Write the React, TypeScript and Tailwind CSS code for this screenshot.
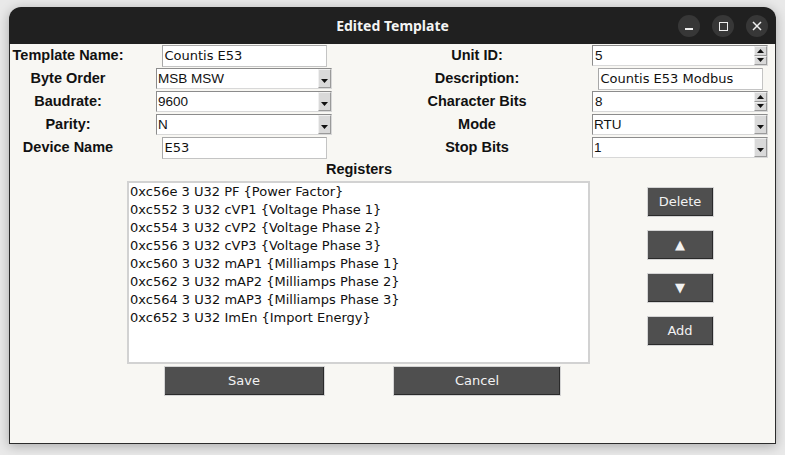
import React from "react";

const sans = { fontFamily: '"Liberation Sans", Arial, sans-serif' };
const deja = { fontFamily: '"DejaVu Sans", "Noto Sans", sans-serif' };

const registers = [
  "0xc56e 3 U32 PF {Power Factor}",
  "0xc552 3 U32 cVP1 {Voltage Phase 1}",
  "0xc554 3 U32 cVP2 {Voltage Phase 2}",
  "0xc556 3 U32 cVP3 {Voltage Phase 3}",
  "0xc560 3 U32 mAP1 {Milliamps Phase 1}",
  "0xc562 3 U32 mAP2 {Milliamps Phase 2}",
  "0xc564 3 U32 mAP3 {Milliamps Phase 3}",
  "0xc652 3 U32 ImEn {Import Energy}",
];

function Label({ children }: { children: React.ReactNode }) {
  return (
    <div className="flex justify-center items-center text-[14.5px] font-bold text-[#111]" style={sans}>
      {children}
    </div>
  );
}

function Entry({ value, width }: { value: string; width: string }) {
  return (
    <div
      className={`${width} h-[22px] bg-white border border-[#c4c4c4] border-t-[#a8a8a8] border-l-[#a8a8a8] pl-[2px] flex items-center text-[13px] text-[#111] leading-none`}
      style={deja}
    >
      {value}
    </div>
  );
}

function Combo({ value }: { value: string }) {
  return (
    <div className="w-[176px] h-[21px] bg-white border border-[#d8d8d8] border-t-[#8c8c8c] border-l-[#8c8c8c] flex">
      <div className="flex-1 pl-[1px] flex items-center text-[13.5px] text-[#111] leading-none" style={sans}>
        {value}
      </div>
      <div className="w-[13px] h-full bg-[#d9d9d9] border border-[#f0f0f0] border-r-[#9a9a9a] border-b-[#9a9a9a] flex items-end justify-center pb-[3px]">
        <svg width="7" height="5" viewBox="0 0 7 5">
          <path d="M0 0 H7 L3.5 4 Z" fill="#111" />
        </svg>
      </div>
    </div>
  );
}

function Spin({ value }: { value: string }) {
  return (
    <div className="w-[176px] h-[21px] bg-white border border-[#d8d8d8] border-t-[#8c8c8c] border-l-[#8c8c8c] flex">
      <div className="flex-1 pl-[2px] flex items-center text-[13.5px] text-[#111] leading-none" style={sans}>
        {value}
      </div>
      <div className="w-[13px] h-full flex flex-col">
        <div className="flex-1 bg-[#d9d9d9] border border-[#f0f0f0] border-r-[#9a9a9a] border-b-[#9a9a9a] flex items-center justify-center">
          <svg width="7" height="4" viewBox="0 0 7 4">
            <path d="M0 4 H7 L3.5 0 Z" fill="#111" />
          </svg>
        </div>
        <div className="flex-1 bg-[#d9d9d9] border border-[#f0f0f0] border-r-[#9a9a9a] border-b-[#9a9a9a] flex items-center justify-center">
          <svg width="7" height="4" viewBox="0 0 7 4">
            <path d="M0 0 H7 L3.5 4 Z" fill="#111" />
          </svg>
        </div>
      </div>
    </div>
  );
}

function Btn({ children, width }: { children: React.ReactNode; width: string }) {
  return (
    <div
      className={`${width} h-[30px] bg-[#4f4f4f] border border-[#d4d4d4] shadow-[inset_-1px_-1px_0_#2a2a2a] flex items-center justify-center text-[13px] text-[#f2f2f2]`}
      style={deja}
    >
      {children}
    </div>
  );
}

function Cell({ children, className = "" }: { children: React.ReactNode; className?: string }) {
  return <div className={`flex items-center justify-center ${className}`}>{children}</div>;
}

export default function App() {
  return (
    <div className="w-[785px] h-[455px] bg-[#e9e9e9] pt-[7px] pl-[9px]">
      <div className="w-[767px] h-[437px] rounded-t-[12px] overflow-hidden shadow-[0_2px_12px_rgba(0,0,0,0.28)] flex flex-col">
        <div className="h-[37px] bg-[#202020] flex items-center relative shrink-0">
          <div
            className="flex-1 text-center text-[14px] font-bold text-[#f4f4f4]"
            style={{ fontFamily: '"Noto Sans", "Open Sans", sans-serif' }}
          >
            Edited Template
          </div>
          <div className="absolute right-[8px] top-[8px] flex gap-[12px]">
            <div className="w-[22px] h-[22px] rounded-full bg-[#373737] flex items-center justify-center">
              <div className="w-[8px] h-[2px] bg-[#eee] mt-[6px]" />
            </div>
            <div className="w-[22px] h-[22px] rounded-full bg-[#373737] flex items-center justify-center">
              <div className="w-[9px] h-[9px] border-[1.5px] border-[#eee]" />
            </div>
            <div className="w-[22px] h-[22px] rounded-full bg-[#373737] flex items-center justify-center">
              <svg width="10" height="10" viewBox="0 0 10 10">
                <path d="M1 1 L9 9 M9 1 L1 9" stroke="#eee" strokeWidth="1.5" />
              </svg>
            </div>
          </div>
        </div>
        <div className="flex-1 bg-[#f8f7f3] border-x border-b border-[#2c2c2c]">
          <div className="grid grid-cols-[116px_236px_230px_176px] grid-rows-[23px_23px_23px_23px_23px_22px_183px_2px_30px]">
            <Label>Template Name:</Label>
            <Cell><Entry value="Countis E53" width="w-[165px]" /></Cell>
            <Label>Unit ID:</Label>
            <Cell><Spin value="5" /></Cell>

            <Label>Byte Order</Label>
            <Cell><Combo value="MSB MSW" /></Cell>
            <Label>Description:</Label>
            <Cell><Entry value="Countis E53 Modbus" width="w-[165px]" /></Cell>

            <Label>Baudrate:</Label>
            <Cell><Combo value="9600" /></Cell>
            <Label>Character Bits</Label>
            <Cell><Spin value="8" /></Cell>

            <Label>Parity:</Label>
            <Cell><Combo value="N" /></Cell>
            <Label>Mode</Label>
            <Cell><Combo value="RTU" /></Cell>

            <Label>Device Name</Label>
            <Cell><Entry value="E53" width="w-[165px]" /></Cell>
            <Label>Stop Bits</Label>
            <Cell><Combo value="1" /></Cell>

            <div />
            <div className="col-span-2"><Label>Registers</Label></div>
            <div />

            <div />
            <div className="col-span-2 pl-[1px] pr-[2px]">
              <div className="h-full bg-white border-2 border-[#d2d2d2] pl-[1px] pt-[0px] text-[13px] leading-[18px] text-[#111]" style={deja}>
                {registers.map((r) => (
                  <div key={r}>{r}</div>
                ))}
              </div>
            </div>
            <div className="flex flex-col items-center pt-[6px] gap-[13px]">
              <Btn width="w-[67px]">Delete</Btn>
              <Btn width="w-[67px]">▲</Btn>
              <Btn width="w-[67px]">▼</Btn>
              <Btn width="w-[67px]">Add</Btn>
            </div>

            <div className="col-span-4" />

            <div />
            <Cell><Btn width="w-[161px]">Save</Btn></Cell>
            <Cell><Btn width="w-[168px]">Cancel</Btn></Cell>
            <div />
          </div>
        </div>
      </div>
    </div>
  );
}
